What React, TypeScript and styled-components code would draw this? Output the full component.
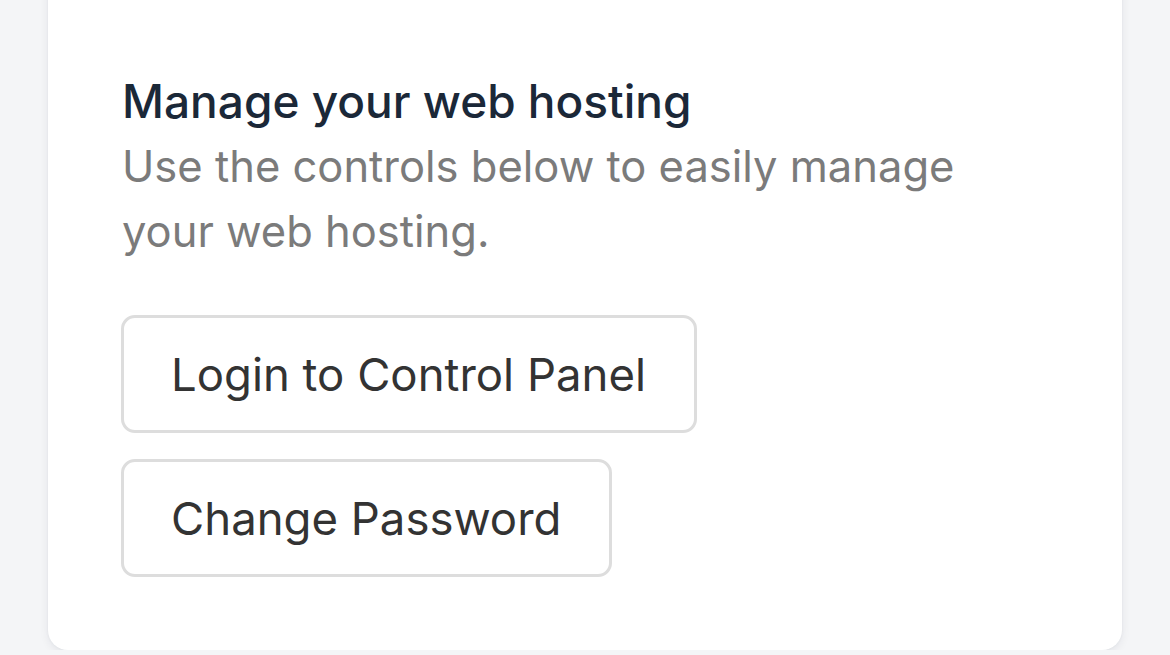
import React from "react";
import styled, { createGlobalStyle } from "styled-components";

const Global = createGlobalStyle`
  html { overflow: hidden; }
  html, body { margin: 0; padding: 0; background: #f4f5f7; }
  body { font-family: Inter, "Noto Sans", sans-serif; -webkit-font-smoothing: antialiased; }
`;

const Page = styled.div`
  width: 1170px;
  padding: 0 48px;
  box-sizing: border-box;
`;

const Card = styled.section`
  margin-top: -40px;
  background: #ffffff;
  border-radius: 20px;
  box-shadow: 0 3px 10px rgba(20, 30, 50, 0.07), 0 0 3px rgba(20, 30, 50, 0.05);
  padding: 113px 74px 73px;
  display: flex;
  flex-direction: column;
`;

const Title = styled.h2`
  margin: 0;
  font-size: 46px;
  line-height: 56px;
  font-weight: 500;
  color: #1b2838;
`;

const Description = styled.p`
  margin: 5px 0 0;
  font-size: 43.5px;
  line-height: 65px;
  color: #7b7b7b;
  max-width: 880px;
`;

const Actions = styled.div`
  margin-top: 51px;
  margin-left: -1px;
  display: flex;
  flex-direction: column;
  align-items: flex-start;
  gap: 26px;
`;

const Button = styled.button`
  font-family: inherit;
  font-size: 45.5px;
  color: #333333;
  background: #ffffff;
  border: 3px solid #dddddd;
  border-radius: 14px;
  height: 118px;
  padding: 0 48px 0 47px;
  box-sizing: border-box;
  cursor: pointer;
`;

export default function App() {
  return (
    <>
      <Global />
      <Page>
        <Card>
          <Title>Manage your web hosting</Title>
          <Description>Use the controls below to easily manage your web hosting.</Description>
          <Actions>
            <Button>Login to Control Panel</Button>
            <Button>Change Password</Button>
          </Actions>
        </Card>
      </Page>
    </>
  );
}
